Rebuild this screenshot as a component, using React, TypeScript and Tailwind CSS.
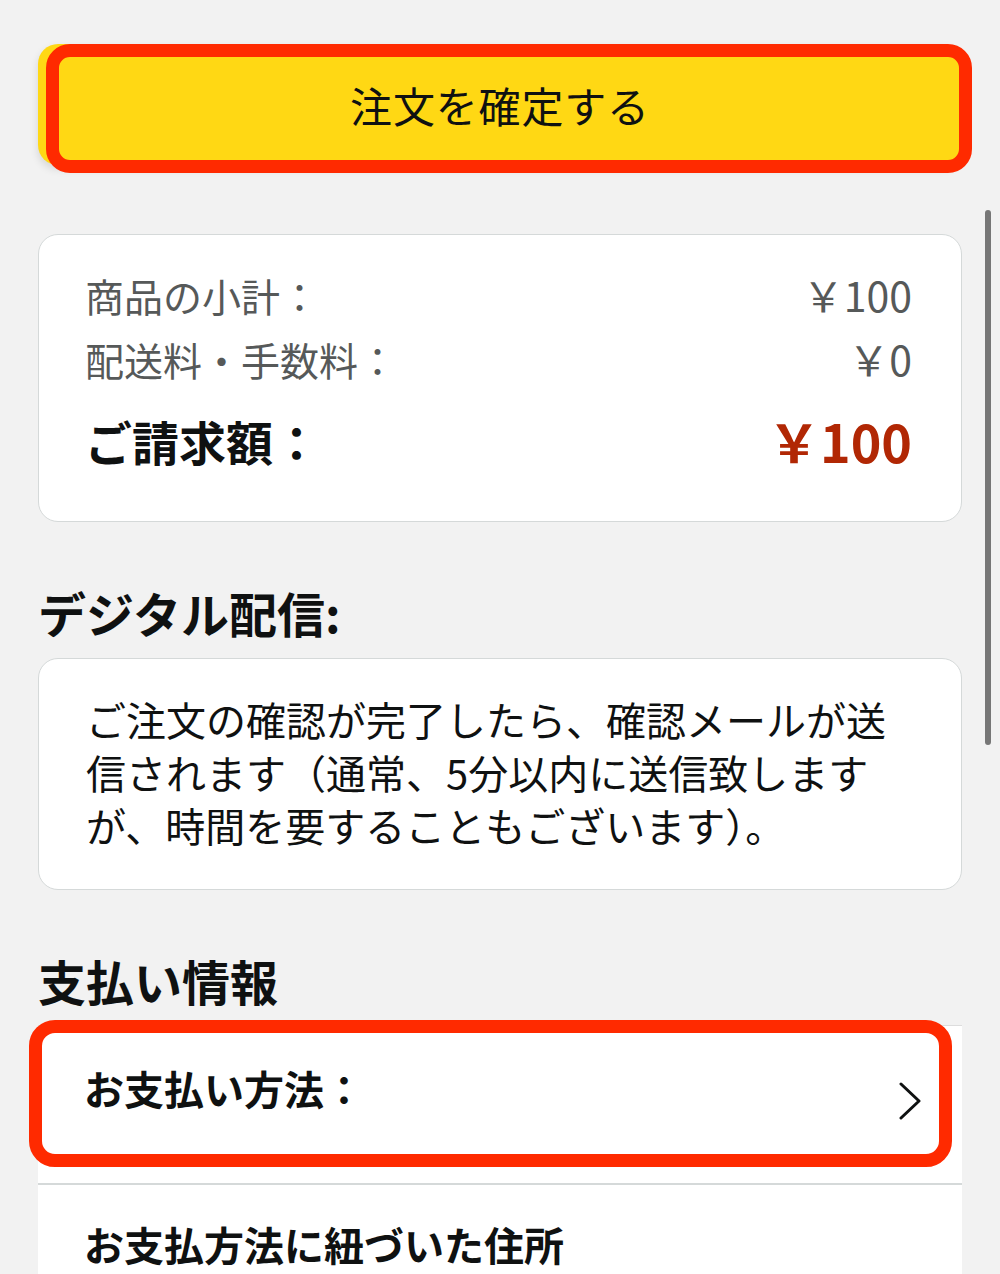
import React from 'react';

const font = { fontFamily: '"Noto Sans CJK JP", "Noto Sans", sans-serif' };

const summaryRows = [
  { label: '商品の小計：', value: '￥100' },
  { label: '配送料・手数料：', value: '￥0' },
];

const Chevron: React.FC = () => (
  <svg width="24" height="38" viewBox="0 0 24 38" fill="none" className="shrink-0">
    <path d="M3 2 L21 19 L3 36" stroke="#0f1111" strokeWidth="3" strokeLinecap="round" strokeLinejoin="round" />
  </svg>
);

const App: React.FC = () => {
  return (
    <div className="min-h-screen bg-[#f2f2f2] relative overflow-hidden" style={font}>
      {/* scrollbar thumb */}
      <div className="absolute left-[985px] top-[210px] w-[6px] h-[535px] rounded-full bg-[#777777]" />

      <div className="pl-[38px] w-[962px] pt-[44px]">
        {/* place order button */}
        <div className="relative">
          <button className="w-[924px] h-[121px] rounded-[20px] bg-[#ffd814] shadow-[0_4px_8px_rgba(0,0,0,0.12)] flex items-center justify-center text-[42px] text-[#0f1111] tracking-[0.02em]">
            注文を確定する
          </button>
          <div className="absolute left-[8px] top-0 w-[926px] h-[129px] rounded-[24px] border-[13px] border-[#ff2a00] pointer-events-none" />
        </div>

        {/* order summary */}
        <div className="mt-[69px] bg-white border border-[#d5d9d9] rounded-[20px] pl-[46px] pr-[49px] pt-[28px] pb-[48px]">
          {summaryRows.map((row) => (
            <div key={row.label} className="h-[64px] flex items-center justify-between text-[39px] text-[#565959]">
              <span>{row.label}</span>
              <span className="text-[41px]">{row.value}</span>
            </div>
          ))}
          <div className="mt-[18px] h-[64px] flex items-center justify-between font-bold">
            <span className="text-[47px] text-[#0f1111]">ご請求額：</span>
            <span className="text-[52px] text-[#b12704]">￥100</span>
          </div>
        </div>

        {/* digital delivery */}
        <h2 className="mt-[62px] mb-[18px] leading-[56px] text-[48px] font-bold text-[#0f1111]">デジタル配信:</h2>
        <div className="bg-white border border-[#d5d9d9] rounded-[20px] pl-[47px] pr-[50px] pt-[34px] pb-[37px]">
          <p className="text-[40px] leading-[53px] text-[#0f1111]">
            ご注文の確認が完了したら、確認メールが送信されます（通常、5分以内に送信致しますが、時間を要することもございます）。
          </p>
        </div>

        {/* payment info */}
        <h2 className="mt-[62px] mb-[17px] leading-[56px] text-[48px] font-bold text-[#0f1111]">支払い情報</h2>
        <div className="relative bg-white border-t border-[#dddddd]">
          <div className="h-[157px] pl-[46px] pr-[40px] pt-[38px] flex items-start justify-between">
            <span className="text-[40px] leading-[48px] font-bold text-[#0f1111]">お支払い方法：</span>
            <div className="mt-[18px]">
              <Chevron />
            </div>
          </div>
          <div className="border-t-2 border-[#d5d9d9] h-[120px] pl-[46px] pt-[35px]">
            <span className="text-[40px] leading-[48px] font-bold text-[#0f1111]">お支払方法に紐づいた住所</span>
          </div>
          <div className="absolute left-[-9px] top-[-6px] w-[923px] h-[147px] rounded-[26px] border-[13px] border-[#ff2a00] pointer-events-none" />
        </div>
      </div>
    </div>
  );
};

export default App;
